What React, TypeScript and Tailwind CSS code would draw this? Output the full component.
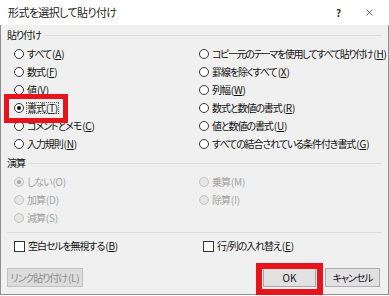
import { X } from "lucide-react";
import type { ReactNode } from "react";

const font = {
	fontFamily: '"Noto Sans CJK JP", "Noto Sans", sans-serif',
};

const Key = ({ k, u = true }: { k: string; u?: boolean }) => (
	<span className="tracking-[-0.2px] ml-[1px]">
		(<span className={u ? "underline underline-offset-[1px]" : ""}>{k}</span>)
	</span>
);

interface RadioProps {
	label: ReactNode;
	checked?: boolean;
	disabled?: boolean;
	focused?: boolean;
}

const Radio = ({ label, checked, disabled, focused }: RadioProps) => (
	<div className="flex items-center h-[18px] gap-[3px]">
		<span
			className={`w-[10px] h-[10px] rounded-full border flex items-center justify-center shrink-0 ${
				disabled
					? "border-[#c4c4c4] bg-[#e6e6e6]"
					: "border-[#333] bg-white"
			}`}
		>
			{checked && (
				<span
					className={`w-[4px] h-[4px] rounded-full ${
						disabled ? "bg-[#a8a8a8]" : "bg-[#111]"
					}`}
				/>
			)}
		</span>
		<span
			className={`whitespace-nowrap leading-none ${
				disabled ? "text-[#a3a3a3]" : "text-[#111]"
			} ${focused ? "outline outline-1 outline-dotted outline-[#555]" : ""}`}
		>
			{label}
		</span>
	</div>
);

const Check = ({ label }: { label: ReactNode }) => (
	<div className="flex items-center h-[18px] gap-[3px]">
		<span className="w-[11px] h-[11px] border border-[#333] bg-white shrink-0" />
		<span className="whitespace-nowrap leading-none text-[#111]">{label}</span>
	</div>
);

const Section = ({ title }: { title: string }) => (
	<div className="flex items-center h-[14px] gap-[3px]">
		<span className="leading-none text-[#111]">{title}</span>
		<span className="flex-1 h-px bg-[#dcdcdc]" />
	</div>
);

export default function App() {
	return (
		<div
			className="relative w-[389px] h-[296px] bg-white overflow-hidden text-[10px] tracking-[-1.1px] [font-feature-settings:'palt']"
			style={font}
		>
			<div className="flex items-center justify-between h-[25px] pl-[8px] pr-[14px] bg-white">
				<span className="text-[11px] text-[#222] tracking-[-0.6px]">形式を選択して貼り付け</span>
				<div className="flex items-center gap-[24px] text-[#333]">
					<span className="text-[10px] font-bold">?</span>
					<X className="w-[11px] h-[11px]" strokeWidth={1.5} />
				</div>
			</div>

			<div className="h-[270px] bg-[#f0f0f0] border-x border-b border-[#8f8f8f] px-[6px]">
				<div className="pt-[3px]">
					<Section title="貼り付け" />
				</div>
				<div className="grid grid-cols-[192px_1fr] mt-[3px]">
					<div className="pl-[7px]">
						<Radio label={<>すべて<Key k="A" /></>} />
						<Radio label={<>数式<Key k="F" /></>} />
						<Radio label={<>値<Key k="V" /></>} />
						<Radio label={<>書式<Key k="T" /></>} checked focused />
						<Radio label={<>コメントとメモ<Key k="C" /></>} />
						<Radio label={<>入力規則<Key k="N" /></>} />
					</div>
					<div>
						<Radio
							label={
								<>
									<span className="tracking-[-1.4px]">コピー元のテーマを使用してすべて貼り付け</span>
									<Key k="H" />
								</>
							}
						/>
						<Radio label={<>罫線を除くすべて<Key k="X" /></>} />
						<Radio label={<>列幅<Key k="W" /></>} />
						<Radio label={<>数式と数値の書式<Key k="R" /></>} />
						<Radio label={<>値と数値の書式<Key k="U" /></>} />
						<Radio label={<>すべての結合されている条件付き書式<Key k="G" /></>} />
					</div>
				</div>

				<div className="mt-[3px]">
					<Section title="演算" />
				</div>
				<div className="grid grid-cols-[192px_1fr] mt-[3px]">
					<div className="pl-[7px]">
						<Radio label={<>しない<Key k="O" u={false} /></>} checked disabled />
						<Radio label={<>加算<Key k="D" u={false} /></>} disabled />
						<Radio label={<>減算<Key k="S" u={false} /></>} disabled />
					</div>
					<div>
						<Radio label={<>乗算<Key k="M" u={false} /></>} disabled />
						<Radio label={<>除算<Key k="I" u={false} /></>} disabled />
					</div>
				</div>

				<div className="mt-[5px] h-px bg-[#dcdcdc]" />

				<div className="grid grid-cols-[195px_1fr] mt-[4px]">
					<div className="pl-[7px]">
						<Check label={<>空白セルを無視する<Key k="B" /></>} />
					</div>
					<div className="pl-[1px]">
						<Check label={<>行/列の入れ替え<Key k="E" /></>} />
					</div>
				</div>

				<div className="flex items-center justify-between mt-[13px] pr-[2px]">
					<div className="flex items-center justify-center w-[76px] h-[19px] bg-[#dcdcdc] border border-[#c2c2c2] text-[#8c8c8c] leading-none whitespace-nowrap">
						リンク貼り付け<Key k="L" u={false} />
					</div>
					<div className="flex items-center gap-[9px]">
						<div className="flex items-center justify-center w-[53px] h-[19px] bg-[#e1e1e1] border border-[#a8a8a8] text-[#111] leading-none tracking-normal">
							OK
						</div>
						<div className="flex items-center justify-center w-[55px] h-[19px] bg-[#e1e1e1] border border-[#adadad] text-[#111] leading-none whitespace-nowrap">
							キャンセル
						</div>
					</div>
				</div>
			</div>

			<div className="absolute left-[4px] top-[94px] w-[64px] h-[29px] border-[5px] border-[#e8141c]" />
			<div className="absolute left-[256px] top-[263px] w-[67px] h-[32px] border-[6px] border-[#e8141c]" />
		</div>
	);
}
